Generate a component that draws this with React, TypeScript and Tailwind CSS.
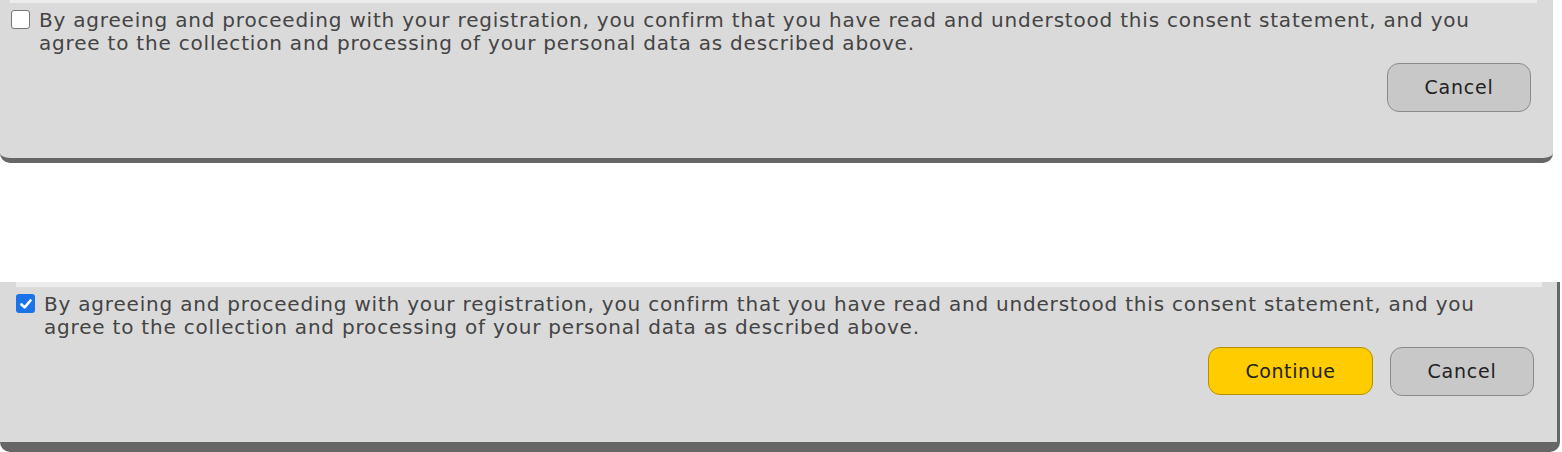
import React from "react";

const FONT = { fontFamily: '"DejaVu Sans", "Liberation Sans", sans-serif' };

function Box({ checked }: { checked: boolean }) {
  if (checked) {
    return (
      <span className="mt-[1px] flex h-[19px] w-[19px] shrink-0 items-center justify-center rounded-[3px] bg-[#1a73e8]">
        <svg width="14" height="14" viewBox="0 0 14 14">
          <path d="M2.5 7.5 L5.6 10.4 L11.5 3.5" fill="none" stroke="#fff" strokeWidth="2.6" strokeLinecap="round" strokeLinejoin="round" />
        </svg>
      </span>
    );
  }
  return <span className="mt-[1px] block h-[19px] w-[19px] shrink-0 rounded-[3px] border border-[#767676] bg-white" />;
}

function Panel({ checked }: { checked: boolean }) {
  return (
    <div
      className={
        "rounded-b-[10px] bg-[#dadada] " +
        (checked
          ? "h-[170px] w-[1560px] border-b-[10px] border-r-[3px] border-[#666] pl-[16px] pr-[23px]"
          : "h-[163px] w-[1553px] border-b-[5px] border-[#666] pl-[11px] pr-[22px]")
      }
      style={FONT}
    >
      <div className={checked ? "h-[5px] bg-[#ececec] mr-[-8px]" : "h-[3px] bg-[#ececec] ml-[-1px] mr-[-6px]"} />
      <div className={(checked ? "mt-[6px]" : "mt-[6px]") + " flex items-start gap-[9px]"}>
        <Box checked={checked} />
        <p className="text-[20px] leading-[23px] tracking-[0.8px] text-[#444] whitespace-nowrap">
          By agreeing and proceeding with your registration, you confirm that you have read and understood this consent statement, and you
          <br />
          agree to the collection and processing of your personal data as described above.
        </p>
      </div>
      <div className="mt-[8px] flex justify-end gap-[17px]">
        {checked && (
          <button className="h-[48px] w-[165px] rounded-[12px] border border-[#b39000] bg-[#ffcc00] text-[19px] tracking-[0.6px] text-[#222]">
            Continue
          </button>
        )}
        <button className="h-[49px] w-[144px] rounded-[12px] border border-[#8a8a8a] bg-[#c8c8c8] text-[19px] tracking-[0.8px] text-[#222]">
          Cancel
        </button>
      </div>
    </div>
  );
}

export default function App() {
  return (
    <div className="h-[452px] w-[1562px] overflow-hidden bg-white">
      <Panel checked={false} />
      <div className="h-[119px]" />
      <Panel checked={true} />
    </div>
  );
}
